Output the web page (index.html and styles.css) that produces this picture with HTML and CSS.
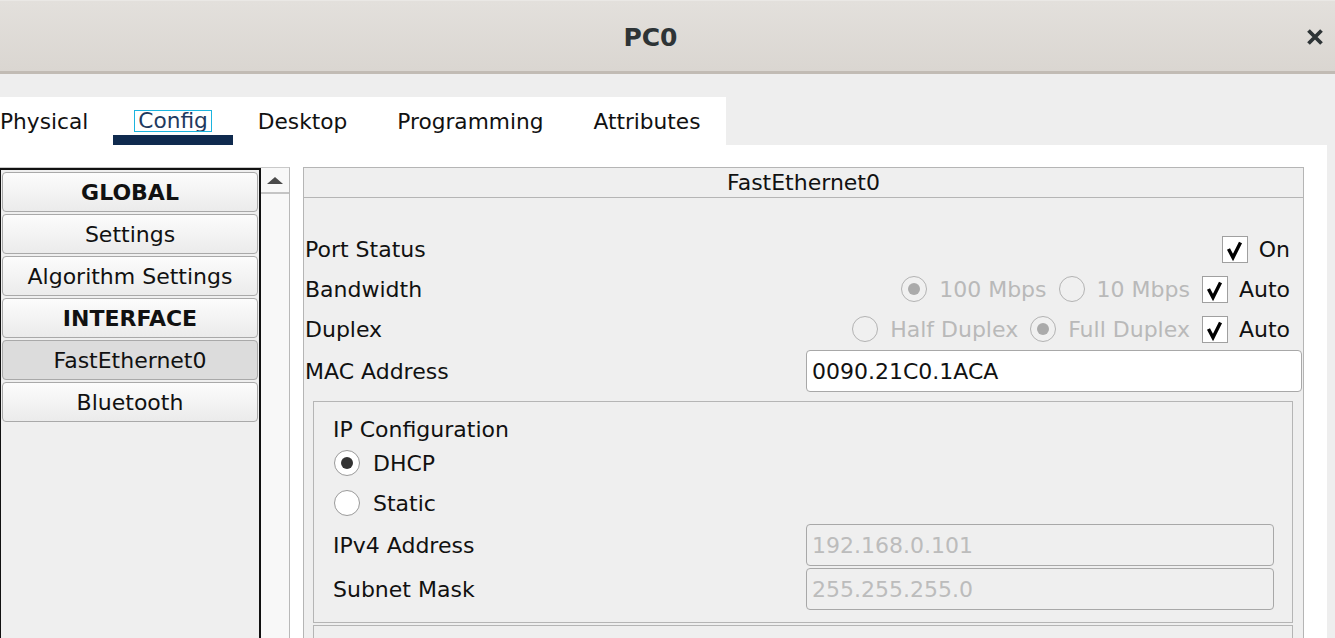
FILE: index.html
```html
<!DOCTYPE html>
<html>
<head>
<meta charset="utf-8">
<title>PC0</title>
<link rel="stylesheet" href="styles.css">
</head>
<body>
<div class="titlebar">
  <div class="title">PC0</div>
  <div class="close">
    <svg width="18" height="16" viewBox="0 0 18 16"><path d="M2.5 1.5 L15.5 14.5 M15.5 1.5 L2.5 14.5" stroke="#2e3436" stroke-width="3.8" fill="none"/></svg>
  </div>
</div>
<div class="topgap"></div>
<div class="tabs">
  <div class="tab">Physical</div>
  <div class="tab active"><span class="focus">Config</span></div>
  <div class="tab">Desktop</div>
  <div class="tab">Programming</div>
  <div class="tab">Attributes</div>
</div>
<div class="content">
  <div class="pane">
    <div class="list">
      <div class="item head">GLOBAL</div>
      <div class="item">Settings</div>
      <div class="item">Algorithm Settings</div>
      <div class="item head">INTERFACE</div>
      <div class="item sel">FastEthernet0</div>
      <div class="item">Bluetooth</div>
    </div>
    <div class="scrollbar">
      <div class="sb-up"><svg width="16" height="7" viewBox="0 0 16 7"><path d="M0 7 L8 0 L16 7 Z" fill="#4a4a4a"/></svg></div>
    </div>
  </div>
  <div class="panel">
    <div class="panel-head">FastEthernet0</div>
    <div class="rows">
      <div class="row">
        <span>Port Status</span>
        <div class="ctrl">
          <span class="check"><svg width="24" height="25" viewBox="0 0 24 25"><path d="M5.5 12 L10 20.5 L17.5 5.5" stroke="#000" stroke-width="3.4" fill="none"/></svg></span>
          <span class="tight">On</span>
        </div>
      </div>
      <div class="row">
        <span>Bandwidth</span>
        <div class="ctrl">
          <span class="radio dis on"></span><span class="dtext">100 Mbps</span>
          <span class="radio dis"></span><span class="dtext">10 Mbps</span>
          <span class="check"><svg width="24" height="25" viewBox="0 0 24 25"><path d="M5.5 12 L10 20.5 L17.5 5.5" stroke="#000" stroke-width="3.4" fill="none"/></svg></span>
          <span class="tight">Auto</span>
        </div>
      </div>
      <div class="row">
        <span>Duplex</span>
        <div class="ctrl">
          <span class="radio dis"></span><span class="dtext">Half Duplex</span>
          <span class="radio dis on"></span><span class="dtext">Full Duplex</span>
          <span class="check"><svg width="24" height="25" viewBox="0 0 24 25"><path d="M5.5 12 L10 20.5 L17.5 5.5" stroke="#000" stroke-width="3.4" fill="none"/></svg></span>
          <span class="tight">Auto</span>
        </div>
      </div>
      <div class="mac-row">
        <span>MAC Address</span>
        <div class="field">0090.21C0.1ACA</div>
      </div>
    </div>
    <div class="ipbox">
      <div class="ip-title">IP Configuration</div>
      <div class="ip-opt"><span class="radio on"></span><span>DHCP</span></div>
      <div class="ip-opt"><span class="radio"></span><span>Static</span></div>
      <div class="ip-grid">
        <span>IPv4 Address</span>
        <div class="field dfield">192.168.0.101</div>
        <span>Subnet Mask</span>
        <div class="field dfield">255.255.255.0</div>
      </div>
    </div>
    <div class="nextbox"></div>
  </div>
</div>
</body>
</html>
```
FILE: styles.css
```css
* { box-sizing: border-box; }
html, body { margin: 0; }
body {
  height: 638px;
  overflow: hidden;
  font-family: "DejaVu Sans", "Liberation Sans", sans-serif;
  font-size: 22px;
  color: #111;
  background: #eeeeee;
  display: flex;
  flex-direction: column;
}
.titlebar {
  height: 74px;
  flex: none;
  background: linear-gradient(#e3e0dc, #dad6d1);
  border-top: 1px solid #eae8e5;
  border-bottom: 3px solid #c1bbb4;
  display: flex;
  align-items: center;
}
.title {
  flex: 1;
  text-align: center;
  font-weight: bold;
  font-size: 25px;
  color: #2e3436;
  padding-top: 3px;
}
.close {
  width: 34px;
  padding-left: 5px;
  padding-top: 1px;
  display: flex;
  align-items: center;
}
.close svg { display: block; }
.topgap { height: 23px; flex: none; }
.tabs {
  display: flex;
  height: 48px;
  flex: none;
  margin-left: -25px;
  font-size: 21.7px;
}
.tab {
  background: #fff;
  padding: 0 25px;
  display: flex;
  align-items: center;
}
.tab.active {
  padding: 0 22px;
  box-shadow: inset 0 -10px #0f2a4e;
  color: #1f3a60;
}
.focus {
  display: inline-block;
  padding: 0 3px;
  line-height: 20px;
  outline: 1.5px solid #1cb4df;
  outline-offset: 0.5px;
  margin-top: -1px;
}
.content {
  flex: 1;
  min-height: 0;
  background: #fff;
  margin-right: 8px;
  display: flex;
  padding-top: 22px;
  overflow: hidden;
}
.pane {
  width: 290px;
  flex: none;
  display: flex;
  border-top: 1px solid #c9c9c9;
  border-right: 1px solid #b9b9b9;
}
.list {
  width: 261px;
  flex: none;
  border: 2px solid #111;
  border-left-width: 1px;
  border-bottom: none;
  background: #efefef;
  padding: 2px 1px 0;
  display: flex;
  flex-direction: column;
  gap: 2px;
}
.item {
  height: 40px;
  flex: none;
  border: 1px solid #a9a9a9;
  border-radius: 4px;
  background: linear-gradient(#fcfcfc, #ebebeb);
  display: flex;
  align-items: center;
  justify-content: center;
}
.item.head { font-weight: bold; }
.item.sel { background: #dcdcdc; }
.scrollbar {
  flex: 1;
  background: #f8f8f8;
}
.sb-up {
  height: 26px;
  border-bottom: 2px solid #c4c4c4;
  display: flex;
  justify-content: center;
  padding-top: 9px;
}
.sb-up svg { display: block; }
.panel {
  margin-left: 13px;
  width: 1001px;
  flex: none;
  border: 1px solid #b5b5b5;
  border-bottom: none;
  background: #efefef;
}
.panel-head {
  height: 30px;
  border-bottom: 1px solid #b5b5b5;
  text-align: center;
  line-height: 29px;
}
.rows { padding-top: 31px; }
.row {
  height: 40px;
  display: flex;
  align-items: center;
  justify-content: space-between;
  padding: 0 13px 0 1px;
}
.ctrl {
  display: flex;
  align-items: center;
  gap: 12px;
}
.ctrl .tight { margin-left: -1px; }
.dtext { color: #b9b9b9; }
.check {
  width: 26px;
  height: 27px;
  border: 1px solid #a0a0a0;
  background: #fff;
  display: flex;
  align-items: center;
  justify-content: center;
}
.check svg { display: block; }
.radio {
  width: 26px;
  height: 26px;
  flex: none;
  border-radius: 50%;
  border: 1.5px solid #9a9a9a;
  background: #fff;
  display: flex;
  align-items: center;
  justify-content: center;
}
.radio.on::after {
  content: "";
  width: 12px;
  height: 12px;
  border-radius: 50%;
  background: #333;
}
.radio.dis {
  border-color: #b3b3b3;
  background: #f0f0f0;
}
.radio.dis.on::after { background: #aaaaaa; }
.mac-row {
  height: 44px;
  display: grid;
  grid-template-columns: 501px 1fr;
  align-items: center;
  padding: 0 1px 0 1px;
}
.field {
  height: 42px;
  border: 1px solid #a8a8a8;
  border-radius: 4px;
  background: #fff;
  padding-left: 5px;
  display: flex;
  align-items: center;
}
.dfield {
  background: #efefef;
  color: #bcbcbc;
}
.ipbox {
  margin: 8px 10px 0 9px;
  border: 1px solid #b5b5b5;
  padding: 13px 18px 12px 19px;
}
.ip-title {
  height: 28px;
  display: flex;
  align-items: center;
}
.ip-opt {
  height: 40px;
  display: flex;
  align-items: center;
  gap: 13px;
  padding-left: 1px;
}
.ip-grid {
  margin-top: 1px;
  display: grid;
  grid-template-columns: 473px 1fr;
  grid-auto-rows: 42px;
  row-gap: 2px;
  align-items: center;
}
.nextbox {
  margin: 2px 10px 0 9px;
  border: 1px solid #b5b5b5;
  height: 40px;
}
```
